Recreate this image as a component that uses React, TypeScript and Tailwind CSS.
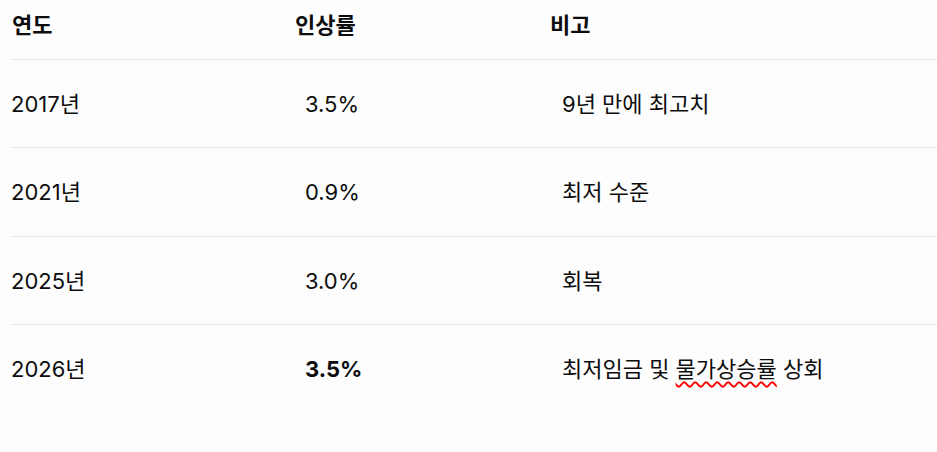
import React from 'react';

type Row = { year: string; rate: string; note: React.ReactNode; bold?: boolean };

const rows: Row[] = [
  { year: '2017년', rate: '3.5%', note: '9년 만에 최고치' },
  { year: '2021년', rate: '0.9%', note: '최저 수준' },
  { year: '2025년', rate: '3.0%', note: '회복' },
  {
    year: '2026년',
    rate: '3.5%',
    bold: true,
    note: (
      <>
        최저임금 및{' '}
        <span className="underline decoration-wavy decoration-[#ff0000] decoration-[1.5px] underline-offset-[4px]">물가상승률</span>{' '}
        상회
      </>
    ),
  },
];

// row bottom paddings so the rules land on 147 / 236 / 324
const pads = ['pb-[29px]', 'pb-[30px]', 'pb-[29px]', 'pb-[29px]'];

export default function App() {
  return (
    <div
      className="w-[937px] h-[452px] bg-[#fdfdfd] text-[#0d0d0d] text-[22px] leading-[28px] pl-[11px]"
      style={{ fontFamily: 'Inter, "Noto Sans CJK KR", sans-serif' }}
    >
      {/* header */}
      <div className="grid grid-cols-[284px_255px_1fr] font-bold pt-[11px] pb-[20px] border-b border-[#e6e6e6]">
        <div className="pl-[1px]">연도</div>
        <div>인상률</div>
        <div>비고</div>
      </div>
      {rows.map((r, i) => (
        <div
          key={r.year}
          className={
            'grid grid-cols-[284px_255px_1fr] pt-[30px] ' +
            pads[i] +
            (i < rows.length - 1 ? ' border-b border-[#e6e6e6]' : '')
          }
        >
          <div>{r.year}</div>
          <div className={r.bold ? 'pl-[10px] font-bold' : 'pl-[10px]'}>{r.rate}</div>
          <div className="pl-[12px]">{r.note}</div>
        </div>
      ))}
    </div>
  );
}
